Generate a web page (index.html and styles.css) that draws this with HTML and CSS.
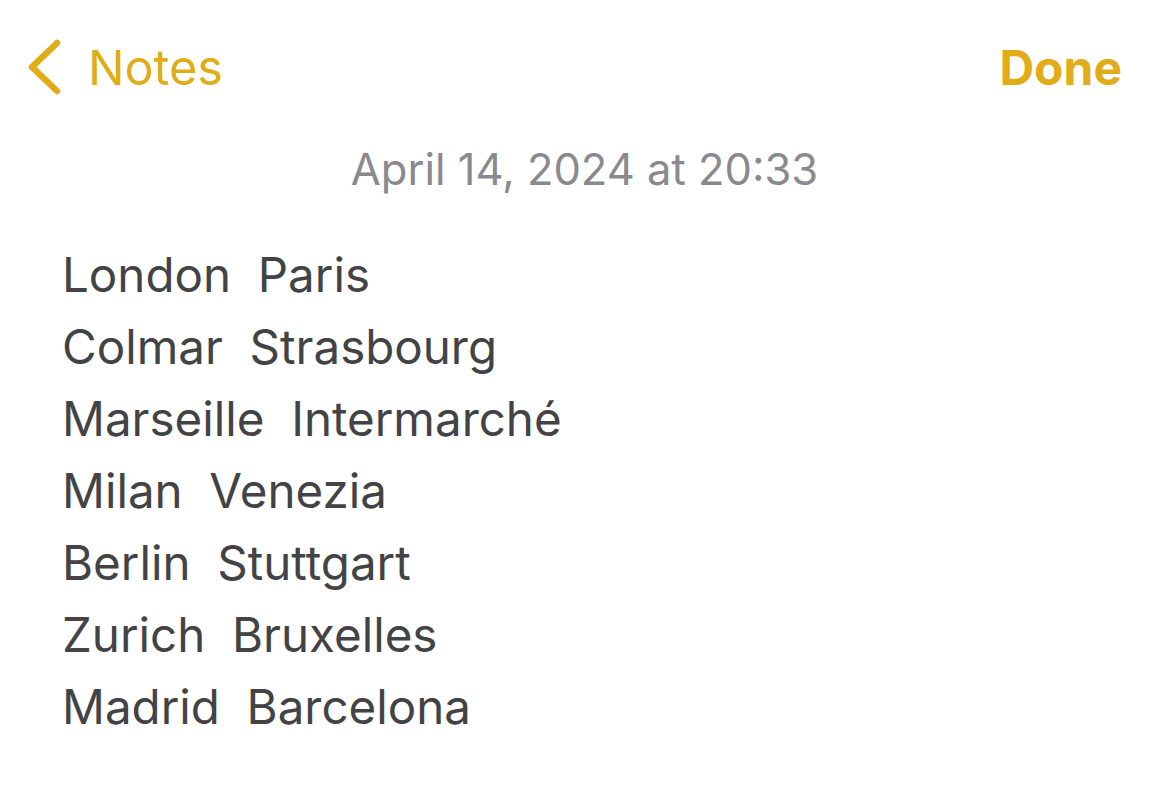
FILE: index.html
```html
<!DOCTYPE html>
<html>
<head>
<meta charset="utf-8">
<link rel="stylesheet" href="styles.css">
</head>
<body>
<div class="page">
  <header class="nav">
    <div class="back">
      <svg class="chev" width="36" height="58" viewBox="0 0 36 58"><path d="M31 5 L6 29 L31 53" fill="none" stroke="#e2ac16" stroke-width="6.5" stroke-linecap="round" stroke-linejoin="round"/></svg>
      <span class="back-label">Notes</span>
    </div>
    <span class="done">Done</span>
  </header>
  <div class="date">April 14, 2024 at 20:33</div>
  <div class="body">
    <div class="line">London&nbsp; Paris</div>
    <div class="line">Colmar&nbsp; Strasbourg</div>
    <div class="line">Marseille&nbsp; Intermarché</div>
    <div class="line">Milan&nbsp; Venezia</div>
    <div class="line">Berlin&nbsp; Stuttgart</div>
    <div class="line">Zurich&nbsp; Bruxelles</div>
    <div class="line">Madrid&nbsp; Barcelona</div>
  </div>
</div>
</body>
</html>
```
FILE: styles.css
```css
html, body { margin: 0; padding: 0; background: #ffffff; }
.page {
  width: 1169px;
  height: 804px;
  font-family: Inter, "Noto Sans", sans-serif;
  overflow: hidden;
}
.nav {
  display: flex;
  justify-content: space-between;
  align-items: center;
  padding: 38px 47px 0 26px;
  height: 58px;
}
.back { display: flex; align-items: center; gap: 26px; }
.chev { display: block; }
.back-label { color: #e2ac16; font-size: 48.5px; font-weight: 400; }
.done { color: #e2ac16; font-size: 48px; font-weight: 700; }
.date {
  text-align: center;
  color: #8a8a8e;
  font-size: 43.5px;
  margin-top: 45px;
  line-height: 56px;
}
.body { padding: 42px 0 0 62px; }
.line { color: #434345; font-size: 47.5px; line-height: 72px; }
```
